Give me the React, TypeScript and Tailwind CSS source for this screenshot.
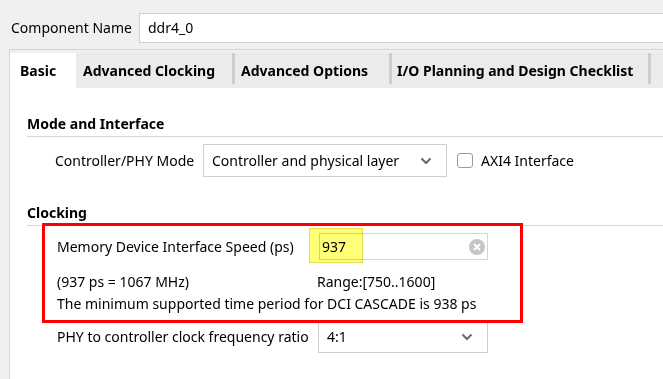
import React from "react";

const Chevron = () => (
  <svg width="12" height="8" viewBox="0 0 12 8" className="text-[#6a6a6a]">
    <path d="M1.5 1.5 L6 6 L10.5 1.5" fill="none" stroke="currentColor" strokeWidth="2" />
  </svg>
);

const ClearIcon = () => (
  <svg width="16" height="16" viewBox="0 0 16 16">
    <circle cx="8" cy="8" r="8" fill="#c6c6c6" />
    <path d="M5 5 L11 11 M11 5 L5 11" stroke="#ffffff" strokeWidth="2" />
  </svg>
);

type SelectProps = {
  value: string;
  width: string;
};

const Select = ({ value, width }: SelectProps) => (
  <div
    className={`${width} h-[33px] flex items-center justify-between bg-white border border-[#cfcfcf] pl-[8px] pr-[14px]`}
  >
    <span>{value}</span>
    <Chevron />
  </div>
);

const SectionHeader = ({ title }: { title: string }) => (
  <div className="h-[23px] border-b border-[#d6d6d6] font-bold leading-[20px]">
    {title}
  </div>
);

const App = () => {
  return (
    <div className="relative w-[663px] h-[379px] overflow-hidden bg-[#f0f0f0] text-[14px] leading-[20px] text-black font-['Noto_Sans',sans-serif]">
      {/* Component name */}
      <div className="flex items-center pt-[13px] pl-[11px]">
        <span className="w-[128px]">Component Name</span>
        <div className="flex-1 h-[30px] flex items-center bg-white border-y border-l border-[#cfcfcf] pl-[8px]">
          ddr4_0
        </div>
      </div>

      {/* Tab panel */}
      <div className="mt-[6px] ml-[9px] border-l border-t border-[#d6d6d6] pt-[3px] h-[331px] flex flex-col">
        <div className="h-[35px] flex bg-[#ebebeb] font-bold shrink-0">
          <div className="w-[66px] bg-white pl-[10px] flex items-center">Basic</div>
          <div className="w-[156px] pl-[7px] flex items-center">Advanced Clocking</div>
          <div className="w-[3px] h-[31px] bg-[#cdcdcd]" />
          <div className="w-[154px] pl-[6px] flex items-center">Advanced Options</div>
          <div className="w-[3px] h-[31px] bg-[#cdcdcd]" />
          <div className="w-[256px] pl-[5px] flex items-center">I/O Planning and Design Checklist</div>
          <div className="w-[3px] h-[31px] bg-[#cdcdcd]" />
        </div>

        <div className="flex-1 bg-white pl-[17px]">
          {/* Mode and Interface */}
          <div className="pt-[26px]">
            <SectionHeader title="Mode and Interface" />
            <div className="mt-[7px] flex items-center pl-[28px]">
              <span className="w-[148px]">Controller/PHY Mode</span>
              <Select value="Controller and physical layer" width="w-[244px]" />
              <div className="ml-[10px] w-[16px] h-[15px] rounded-[3px] border border-[#9a9a9a] bg-white" />
              <span className="ml-[8px]">AXI4 Interface</span>
            </div>
          </div>

          {/* Clocking */}
          <div className="pt-[26px]">
            <SectionHeader title="Clocking" />
            <div className="pl-[30px]">
              <div className="mt-[7px] flex items-center">
                <span className="w-[262px]">Memory Device Interface Speed (ps)</span>
                <div className="w-[169px] h-[27px] flex items-center justify-between bg-white border border-[#d4d4d4] pl-[2px] pr-[2px]">
                  <span>937</span>
                  <ClearIcon />
                </div>
              </div>
              <div className="mt-[12px] flex">
                <span className="w-[260px]">(937 ps = 1067 MHz)</span>
                <span>Range:[750..1600]</span>
              </div>
              <div className="mt-[2px]">
                The minimum supported time period for DCI CASCADE is 938 ps
              </div>
              <div className="mt-[6px] flex items-center">
                <span className="w-[261px]">PHY to controller clock frequency ratio</span>
                <Select value="4:1" width="w-[170px]" />
              </div>
            </div>
          </div>
        </div>
      </div>

      {/* Annotations */}
      <div className="absolute left-[309px] top-[228px] w-[54px] h-[35px] bg-[#ffff78] border-[1.5px] border-[#ecdc50] mix-blend-multiply" />
      <div className="absolute left-[42px] top-[223px] w-[481px] h-[100px] border-[3px] border-[#ff0000]" />
    </div>
  );
};

export default App;
